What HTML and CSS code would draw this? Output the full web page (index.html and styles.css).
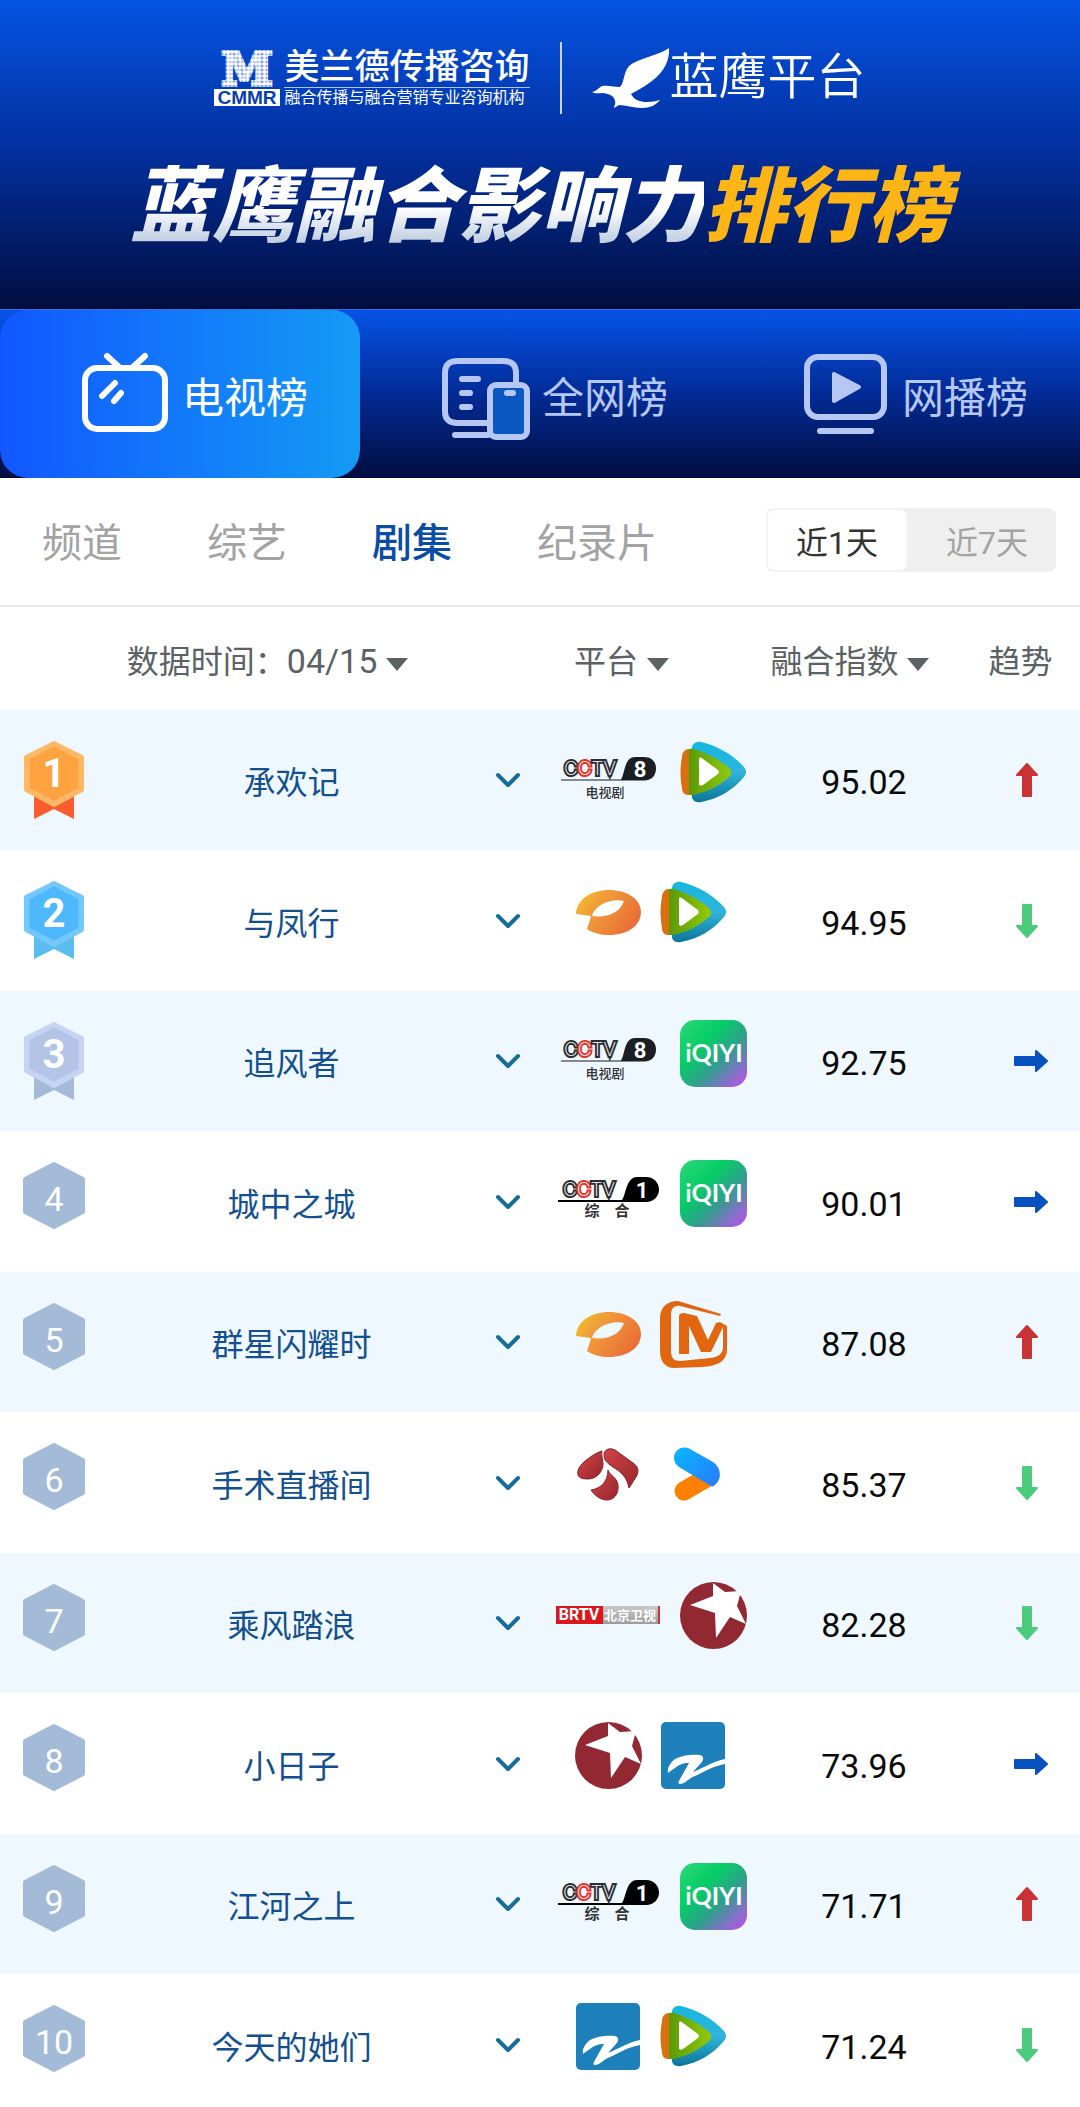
FILE: index.html
```html
<!DOCTYPE html>
<html lang="zh-CN">
<head>
    <meta charset="UTF-8">
    <meta name="viewport" content="width=device-width, initial-scale=1.0">
    <title>蓝鹰融合影响力排行榜</title>
    <link rel="stylesheet" href="styles.css">
</head>
<body>
    <svg class="sprite" width="0" height="0" aria-hidden="true">
        <defs>
            <pattern id="dots" width="4" height="4" patternUnits="userSpaceOnUse">
                <rect width="4" height="4" fill="#fff" fill-opacity="0.45"/>
                <circle cx="2" cy="2" r="1.8" fill="#fff"/>
            </pattern>
            <linearGradient id="gBlue" x1="0" y1="0" x2="0" y2="1">
                <stop offset="0" stop-color="#14b8e0"/>
                <stop offset="0.5" stop-color="#2fb4dc"/>
                <stop offset="1" stop-color="#0a7596"/>
            </linearGradient>
            <linearGradient id="gGreen" x1="0" y1="0" x2="1" y2="0">
                <stop offset="0" stop-color="#5a9a06"/>
                <stop offset="1" stop-color="#93c90d"/>
            </linearGradient>
            <linearGradient id="gMango" x1="0" y1="0" x2="1" y2="0.5">
                <stop offset="0" stop-color="#f3c726"/>
                <stop offset="0.35" stop-color="#f0a038"/>
                <stop offset="1" stop-color="#ea7038"/>
            </linearGradient>
            <linearGradient id="gIqiyi" x1="0" y1="0" x2="1" y2="1">
                <stop offset="0" stop-color="#2bd877"/>
                <stop offset="0.35" stop-color="#06cd66"/>
                <stop offset="0.6" stop-color="#2f9f8c"/>
                <stop offset="0.8" stop-color="#7f74c4"/>
                <stop offset="1" stop-color="#c548ee"/>
            </linearGradient>
            <linearGradient id="gYouku" x1="0" y1="0" x2="1" y2="1">
                <stop offset="0" stop-color="#06b9ff"/>
                <stop offset="1" stop-color="#2a78ff"/>
            </linearGradient>
            <linearGradient id="gPetal" x1="0" y1="0" x2="1" y2="1">
                <stop offset="0" stop-color="#cf4447"/>
                <stop offset="1" stop-color="#98262c"/>
            </linearGradient>
            <linearGradient id="gGrey" x1="0" y1="0" x2="0" y2="1">
                <stop offset="0" stop-color="#c9c9c9"/>
                <stop offset="1" stop-color="#9c9c9c"/>
            </linearGradient>
        </defs>

        <symbol id="cctv8" viewBox="0 0 107 67">
            <path d="M6 40.500H66C70 35 69 18 80 18H89C97 18 101 23 101 29.500S97 41.500 89 41.500H6Z" fill="#1b1e23"/>
        </symbol>
        <symbol id="cctv1" viewBox="0 0 107 67">
            <path d="M3 40H67C71 35 71 17 82 17H91C99 17 104 23 104 29.500S99 42 91 42H3Z" fill="#000"/>
        </symbol>
        <symbol id="brtv" viewBox="0 0 107 67">
            <rect x="1" y="24" width="104" height="18" fill="url(#gGrey)"/>
            <rect x="1" y="24" width="47" height="18" fill="#d8181c"/>
            <rect x="103" y="24" width="2" height="18" fill="#c8383c"/>
        </symbol>
        <symbol id="tencent" viewBox="0 0 67 67">
            <path d="M12 12C11 6 15 2 21 3C38 7 53 16 63 27C67 31 67 35 63 39C53 51 38 60 21 63C15 64 11 61 12 55Z" fill="url(#gBlue)"/>
            <path d="M12 10H8C4 11 2 14 2 18C0 28 0 39 2 49C2 53 4 56 8 56H12Z" fill="#d9700f"/>
            <path d="M9 11C10 9 14 10 17 11C29 15 40 21 49 29C52 32 52 35 49 38C40 46 29 52 17 55C14 56 10 57 9 54Z" fill="url(#gGreen)"/>
            <path d="M19 20C19 18 21 18 23 20L38 31C39 33 39 34 38 35L23 46C21 47 19 47 19 45Z" fill="#fff"/>
        </symbol>
        <symbol id="hunan" viewBox="0 0 67 67">
            <path fill-rule="evenodd" d="M1 35C2 20 16 11 34 11C52 11 66 20 66 33C66 47 52 56 34 56C26 56 18 54 12 50C13 46 15 42 16 37ZM17 37C32 39 45 34 49 22C36 19 20 26 17 37Z" fill="url(#gMango)"/>
        </symbol>
        <symbol id="iqiyi" viewBox="0 0 67 67">
            <rect width="67" height="67" rx="15" fill="url(#gIqiyi)"/>
        </symbol>
        <symbol id="mgtv" viewBox="0 0 67 67">
            <path d="M60 15L20 5C14 4 11 8 11 14V50C11 57 14 60 20 60L50 57C60 56 63 52 63 45V26L51 51H41L29 25V53H19V16C19 13 21 12 24 12L37 15L48 39L56 22L60 21L67 25V48C67 60 58 65 42 66L14 67C5 67 0 60 0 50V18C0 6 7 0 18 0L61 13Z" fill="#e2650f"/>
        </symbol>
        <symbol id="jiangsu" viewBox="0 0 67 67">
            <g fill="url(#gPetal)" stroke="#8b2028">
                <path d="M27 10C20 12 8 20 4 27C0 36 6 38 13 38C22 38 28 30 28 23C28 18 26 15 27 10Z"/>
                <path d="M29 14C29 9 34 6 40 9L58 22C64 26 64 31 61 36L54 47C52 36 46 31 38 26C32 22 29 19 29 14Z"/>
                <path d="M33 29C34 34 42 36 43 44C44 54 38 59 32 59C26 59 20 55 16 49C24 48 33 42 33 29Z"/>
            </g>
        </symbol>
        <symbol id="youku" viewBox="0 0 67 67">
            <path d="M24 50L48 36" fill="none" stroke="#ff7f00" stroke-width="19" stroke-linecap="round"/>
            <path d="M14 17C14 9 22 4 30 8L53 21C61 26 62 37 56 43C54 45 52 46 51 45L19 26C16 24 14 21 14 17Z" fill="url(#gYouku)"/>
        </symbol>
        <symbol id="dragon" viewBox="0 0 67 67">
            <circle cx="33.500" cy="33.500" r="33.500" fill="#922831"/>
            <path d="M33 1L45 10L61 9L57 24L66 42L50 35L36 56L35 31L10 23L33 14Z" fill="#fff"/>
        </symbol>
        <symbol id="zhejiang" viewBox="0 0 67 67">
            <rect x="1" width="64" height="67" rx="5" fill="#1d80bb"/>
            <path d="M8 51C7 46 10 41 15 37C22 33 32 32 40 33C44 34 44 38 41 41L33 50C43 46 54 39 65 37V42C53 44 44 50 35 54C29 56 25 62 20 62C17 62 19 59 20 57L29 41C21 40 15 46 8 51Z" fill="#fff"/>
        </symbol>

        <symbol id="medal" viewBox="0 0 62 79">
            <path d="M11 54H51V78L31 68L11 78Z" fill="var(--ribbon)"/>
            <path d="M31 2L59 16V49L31 64L3 49V16Z" fill="var(--edge)" stroke="var(--edge)" stroke-width="4" stroke-linejoin="round"/>
            <path d="M31 7L54 19V46L31 58L8 46V19Z" fill="var(--face)" stroke="var(--face)" stroke-width="3" stroke-linejoin="round"/>
        </symbol>
        <symbol id="hexagon" viewBox="0 0 62 67">
            <path d="M31 2L60 17V50L31 65L2 50V17Z" fill="#a4bbd8" stroke="#a4bbd8" stroke-width="4" stroke-linejoin="round"/>
        </symbol>

        <symbol id="down" viewBox="0 0 36 36">
            <path d="M14 2H22V23H28L18 34L8 23H14Z" fill="#4bcb7c" stroke="#4bcb7c" stroke-width="2" stroke-linejoin="round"/>
        </symbol>
        <symbol id="up" viewBox="0 0 36 36">
            <path d="M14 34H22V13H28L18 2L8 13H14Z" fill="#cb3234" stroke="#cb3234" stroke-width="2" stroke-linejoin="round"/>
        </symbol>
        <symbol id="flat" viewBox="0 0 36 36">
            <path d="M2 14H23V8L34 18L23 28V22H2Z" fill="#0752c0" stroke="#0752c0" stroke-width="2" stroke-linejoin="round"/>
        </symbol>
    </svg>

    <header class="banner">
        <div class="logos">
            <div class="cmmr">
                <svg class="cmmr-mark" width="66" height="56" viewBox="0 0 66 56" role="img" aria-label="CMMR">
                    <text class="cmmr-m" x="33" y="35">M</text>
                    <rect y="39" width="66" height="17" fill="#fff"/>
                    <text class="cmmr-name" x="33" y="54">CMMR</text>
                </svg>
                <div class="cmmr-text">
                    <strong>美兰德传播咨询</strong>
                    <small>融合传播与融合营销专业咨询机构</small>
                </div>
            </div>
            <div class="eagle">
                <svg width="78" height="60" viewBox="0 0 78 60" aria-hidden="true">
                    <path d="M77 0C78 12 72 24 60 33C52 39 46 42 39 46C42 52 48 54 55 54C60 54 64 53 68 52C64 57 58 60 50 60C41 60 34 57 27 57L22 60C22 58 24 56 23 53C22 48 18 46 11 45C7 45 3 46 0 44C5 43 6 40 10 38C17 37 22 39 28 39C33 33 31 25 37 18C46 10 66 8 77 0Z" fill="#fff"/>
                </svg>
                <span>蓝鹰平台</span>
            </div>
        </div>
        <h1><span class="silver">蓝鹰融合影响力</span><span class="gold">排行榜</span></h1>
    </header>

    <nav class="boards">
        <button type="button" class="board active">
            <svg width="88" height="96" viewBox="0 -4 88 96" fill="none" stroke="currentColor" stroke-width="6" stroke-linecap="round" stroke-linejoin="round" aria-hidden="true">
                <rect x="3" y="18" width="80" height="61" rx="12"/>
                <path d="M25 6L37 17M63 6L51 17M33 33L20 46M39 43L32 51"/>
            </svg>
            电视榜
        </button>
        <button type="button" class="board">
            <svg width="88" height="96" viewBox="0 -9 88 96" fill="none" stroke="currentColor" stroke-width="6" stroke-linecap="round" stroke-linejoin="round" aria-hidden="true">
                <path d="M46 68H16C7 68 3 64 3 56V18C3 10 7 6 16 6H61C70 6 74 10 74 18V28M20 24H36M20 38H28M20 52H28M13 80H46"/>
                <rect x="48" y="30" width="37" height="52" rx="6" fill="#0a58bf"/>
                <path d="M65 38H71"/>
            </svg>
            全网榜
        </button>
        <button type="button" class="board">
            <svg width="88" height="96" viewBox="0 -7 88 96" fill="none" stroke="currentColor" stroke-width="6" stroke-linecap="round" stroke-linejoin="round" aria-hidden="true">
                <rect x="5" y="4" width="77" height="60" rx="11"/>
                <path d="M32 21V48L57 34Z" fill="currentColor" stroke-width="4"/>
                <path d="M18 78H69"/>
            </svg>
            网播榜
        </button>
    </nav>

    <main>
        <div class="filters">
            <nav class="types">
                <a href="#">频道</a>
                <a href="#">综艺</a>
                <a href="#" class="active">剧集</a>
                <a href="#">纪录片</a>
            </nav>
            <div class="range">
                <button type="button" class="active">近1天</button>
                <button type="button">近7天</button>
            </div>
        </div>

        <table class="ranking">
            <colgroup>
                <col class="col-rank">
                <col class="col-name">
                <col class="col-more">
                <col class="col-platform">
                <col class="col-score">
                <col class="col-trend">
            </colgroup>
            <thead>
                <tr>
                    <td></td>
                    <th class="th-date"><button type="button">数据时间：<span class="num">04/15</span><i class="caret"></i></button></th>
                    <td></td>
                    <th class="th-platform"><button type="button">平台<i class="caret"></i></button></th>
                    <th class="th-score"><button type="button">融合指数<i class="caret"></i></button></th>
                    <th>趋势</th>
                </tr>
            </thead>
            <tbody id="rankingList"></tbody>
        </table>
    </main>

    <script>
        const dramas = [
            { name: '承欢记', platforms: ['cctv8', 'tencent'], score: '95.02', trend: 'up' },
            { name: '与凤行', platforms: ['hunan', 'tencent'], score: '94.95', trend: 'down' },
            { name: '追风者', platforms: ['cctv8', 'iqiyi'], score: '92.75', trend: 'flat' },
            { name: '城中之城', platforms: ['cctv1', 'iqiyi'], score: '90.01', trend: 'flat' },
            { name: '群星闪耀时', platforms: ['hunan', 'mgtv'], score: '87.08', trend: 'up' },
            { name: '手术直播间', platforms: ['jiangsu', 'youku'], score: '85.37', trend: 'down' },
            { name: '乘风踏浪', platforms: ['brtv', 'dragon'], score: '82.28', trend: 'down' },
            { name: '小日子', platforms: ['dragon', 'zhejiang'], score: '73.96', trend: 'flat' },
            { name: '江河之上', platforms: ['cctv1', 'iqiyi'], score: '71.71', trend: 'up' },
            { name: '今天的她们', platforms: ['zhejiang', 'tencent'], score: '71.24', trend: 'down' },
        ];
        const wide = ['cctv8', 'cctv1', 'brtv'];
        const trendNames = { up: '上升', down: '下降', flat: '持平' };

        // lettering that goes on top of the logo shapes
        const logoTexts = {
            cctv8: `<text class="cctv" x="9" y="36">C<tspan class="cctv-red">C</tspan>TV</text>
                <text class="cctv-num" x="85" y="38">8</text>
                <text class="cctv-sub" x="50" y="58">电视剧</text>`,
            cctv1: `<text class="cctv" x="8" y="36">C<tspan class="cctv-red">C</tspan>TV</text>
                <text class="cctv-num" x="87" y="38">1</text>
                <text class="cctv-sub bold" x="37" y="56">综</text>
                <text class="cctv-sub bold" x="67" y="56">合</text>`,
            brtv: `<text class="brtv" x="24" y="38">BRTV</text>
                <text class="brtv-sub" x="75" y="38">北京卫视</text>`,
            iqiyi: `<text class="iqiyi" x="34" y="42">iQIYI</text>`,
        };

        function rankBadge(rank) {
            if (rank <= 3) {
                return `<svg class="medal medal-${rank}" width="62" height="79"><use href="#medal"/><text x="31" y="46">${rank}</text></svg>`;
            }
            return `<svg class="hexagon" width="62" height="67"><use href="#hexagon"/><text x="31" y="49">${rank}</text></svg>`;
        }

        function platformLogo(id) {
            const width = wide.includes(id) ? 107 : 67;
            return `<svg width="${width}" height="67"><use href="#${id}"/>${logoTexts[id] || ''}</svg>`;
        }

        document.getElementById('rankingList').innerHTML = dramas.map((drama, i) => `
            <tr>
                <td class="rank">${rankBadge(i + 1)}</td>
                <td class="name"><a href="#">${drama.name}</a></td>
                <td class="more">
                    <button type="button" aria-label="展开${drama.name}">
                        <svg width="28" height="18" viewBox="0 0 28 18"><path d="M4 4L14 14L24 4"/></svg>
                    </button>
                </td>
                <td><div class="platforms">${drama.platforms.map(platformLogo).join('')}</div></td>
                <td class="score">${drama.score}</td>
                <td class="trend trend-${drama.trend}"><svg width="36" height="36" role="img" aria-label="${trendNames[drama.trend]}"><use href="#${drama.trend}"/></svg></td>
            </tr>`).join('');
    </script>
</body>
</html>
```
FILE: styles.css
```css
* {
    box-sizing: border-box;
}
body {
    font-family: Roboto, 'Noto Sans CJK SC', sans-serif;
    font-size: 32px;
    background-color: #fff;
    margin: 0;
}
button {
    font: inherit;
    color: inherit;
    background: none;
    border: none;
    padding: 0;
    cursor: pointer;
}
a {
    color: inherit;
    text-decoration: none;
}
.sprite {
    position: absolute;
}

/* banner */
.banner {
    display: flex;
    flex-direction: column;
    align-items: center;
    gap: 43px;
    padding: 42px 20px 52px;
    color: #fff;
    background: linear-gradient(#0453e2, #032f9c 50%, #010d3f);
}
.logos {
    display: flex;
    align-items: center;
    height: 72px;
}
.cmmr {
    display: flex;
    align-items: center;
    gap: 4px;
    padding-right: 30px;
}
.cmmr-m {
    font-family: 'DejaVu Serif', serif;
    font-size: 46px;
    font-weight: bold;
    text-anchor: middle;
    fill: url(#dots);
    stroke: url(#dots);
    stroke-width: 4px;
}
.cmmr-name {
    font-family: 'Liberation Sans', sans-serif;
    font-size: 19px;
    font-weight: bold;
    text-anchor: middle;
    fill: #0640b0;
}
.cmmr-text {
    display: flex;
    flex-direction: column;
}
.cmmr-text strong {
    font-size: 35px;
    font-weight: 500;
    line-height: 38px;
    border-bottom: 1px solid #a9c4f5;
}
.cmmr-text small {
    font-size: 16px;
    line-height: 20px;
}
.eagle {
    display: flex;
    align-items: center;
    height: 72px;
    padding-left: 30px;
    border-left: 2px solid #c3d6f8;
    font-size: 49px;
    font-weight: 350;
    line-height: 60px;
}
.banner h1 {
    margin: 0;
    font-size: 82px;
    font-weight: 900;
    font-style: italic;
    line-height: 100px;
    white-space: nowrap;
}
.silver {
    color: transparent;
    background: linear-gradient(#fff 50%, #c3d0e2 85%);
    -webkit-background-clip: text;
    background-clip: text;
}
.gold {
    color: #fdb515;
}

/* board tabs */
.boards {
    display: grid;
    grid-template-columns: repeat(3, 1fr);
    border-top: 1px solid #3f6fd0;
    background: linear-gradient(#0553e8, #032b96 50%, #010d3f);
}
.board {
    display: flex;
    justify-content: center;
    align-items: center;
    gap: 12px;
    height: 168px;
    padding-left: 30px;
    border-radius: 28px;
    color: #b5c7f2;
    font-size: 42px;
}
.board.active {
    color: #fff;
    background: linear-gradient(90deg, #1157ff, #149bf5);
}

/* filters */
.filters {
    display: flex;
    justify-content: space-between;
    align-items: center;
    height: 129px;
    padding: 0 24px 4px 42px;
    border-bottom: 2px solid #e9e9e9;
}
.types {
    display: flex;
    gap: 85px;
    font-size: 40px;
    color: #a3a3a3;
}
.types .active {
    color: #0b4da2;
    font-weight: 500;
}
.range {
    display: flex;
    height: 64px;
    border-radius: 8px;
    background-color: #efefef;
}
.range button {
    width: 148px;
    padding-left: 10px;
    color: #a3a3a3;
}
.range .active {
    width: 142px;
    padding-left: 0;
    color: #333;
    background-color: #fff;
    border: 2px solid #f3f3f3;
    border-radius: 8px;
}

/* ranking table */
.ranking {
    width: 100%;
    table-layout: fixed;
    border-collapse: collapse;
}
.col-rank {
    width: 10%;
}
.col-name {
    width: 34%;
}
.col-more {
    width: 6%;
}
.col-platform {
    width: 21%;
}
.col-score {
    width: 18%;
}
.col-trend {
    width: 11%;
}
.ranking td,
.ranking th {
    padding: 0;
    text-align: center;
}
.ranking th {
    height: 103px;
    color: #5b6266;
    font-weight: 400;
    white-space: nowrap;
}
.ranking .th-date {
    padding-right: 48px;
}
.ranking .th-platform {
    padding-right: 64px;
}
.ranking .th-score {
    padding-right: 28px;
}
.num {
    font-size: 34px;
}
.caret {
    display: inline-block;
    margin-left: 9px;
    border: 11px solid transparent;
    border-top: 13px solid #5b6266;
    border-bottom: 0;
    vertical-align: middle;
}
tbody tr {
    height: 140px;
}
tbody tr:nth-child(odd) {
    background-color: #eff8ff;
}
tbody tr:nth-child(even) {
    height: 141px;
}
.ranking .rank {
    padding-top: 31px;
    vertical-align: top;
}
.rank svg {
    display: block;
    margin: 0 auto;
}
.rank text {
    text-anchor: middle;
    fill: #fff;
}
.medal text {
    font-size: 40px;
    font-weight: 700;
}
.hexagon text {
    font-size: 34px;
}
.medal-1 {
    --face: #ffa340;
    --edge: #ffb866;
    --ribbon: #fb5c2c;
}
.medal-2 {
    --face: #4db8fb;
    --edge: #74c8fb;
    --ribbon: #5bbcf0;
}
.medal-3 {
    --face: #b3c4e6;
    --edge: #c6d3f3;
    --ribbon: #a5b9d9;
}
.ranking .name {
    color: #14508f;
}
.more button {
    display: block;
    margin: 0 auto;
    line-height: 0;
}
.more path {
    fill: none;
    stroke: #186d98;
    stroke-width: 4;
    stroke-linecap: round;
    stroke-linejoin: round;
}
.platforms {
    display: flex;
    justify-content: center;
    gap: 18px;
    padding: 0 4px 16px 0;
}
.ranking .score {
    padding-top: 4px;
    font-size: 34px;
    color: #0a0a0a;
}
.trend svg {
    display: block;
    margin: 0 auto;
}
.ranking .trend {
    padding-left: 12px;
}
.ranking .trend-flat {
    padding-left: 20px;
}

/* text inside the channel logos */
.cctv {
    font-family: Inter, sans-serif;
    font-size: 19px;
    font-weight: 200;
    fill: #fff;
    stroke: #2a2d32;
    stroke-width: 4px;
    paint-order: stroke;
}
.cctv-red {
    stroke: #e0352b;
}
.cctv-num {
    font-size: 22px;
    font-weight: 700;
    text-anchor: middle;
    fill: #fff;
}
.cctv-sub {
    font-size: 13px;
    font-weight: 500;
    text-anchor: middle;
    fill: #333;
}
.cctv-sub.bold {
    font-size: 15px;
    font-weight: 700;
}
.brtv {
    font-size: 16px;
    font-weight: 700;
    text-anchor: middle;
    fill: #fff;
}
.brtv-sub {
    font-size: 13px;
    font-weight: 700;
    text-anchor: middle;
    fill: #fff;
}
.iqiyi {
    font-family: Lato, sans-serif;
    font-size: 25px;
    font-weight: 700;
    text-anchor: middle;
    fill: #fff;
}
```
